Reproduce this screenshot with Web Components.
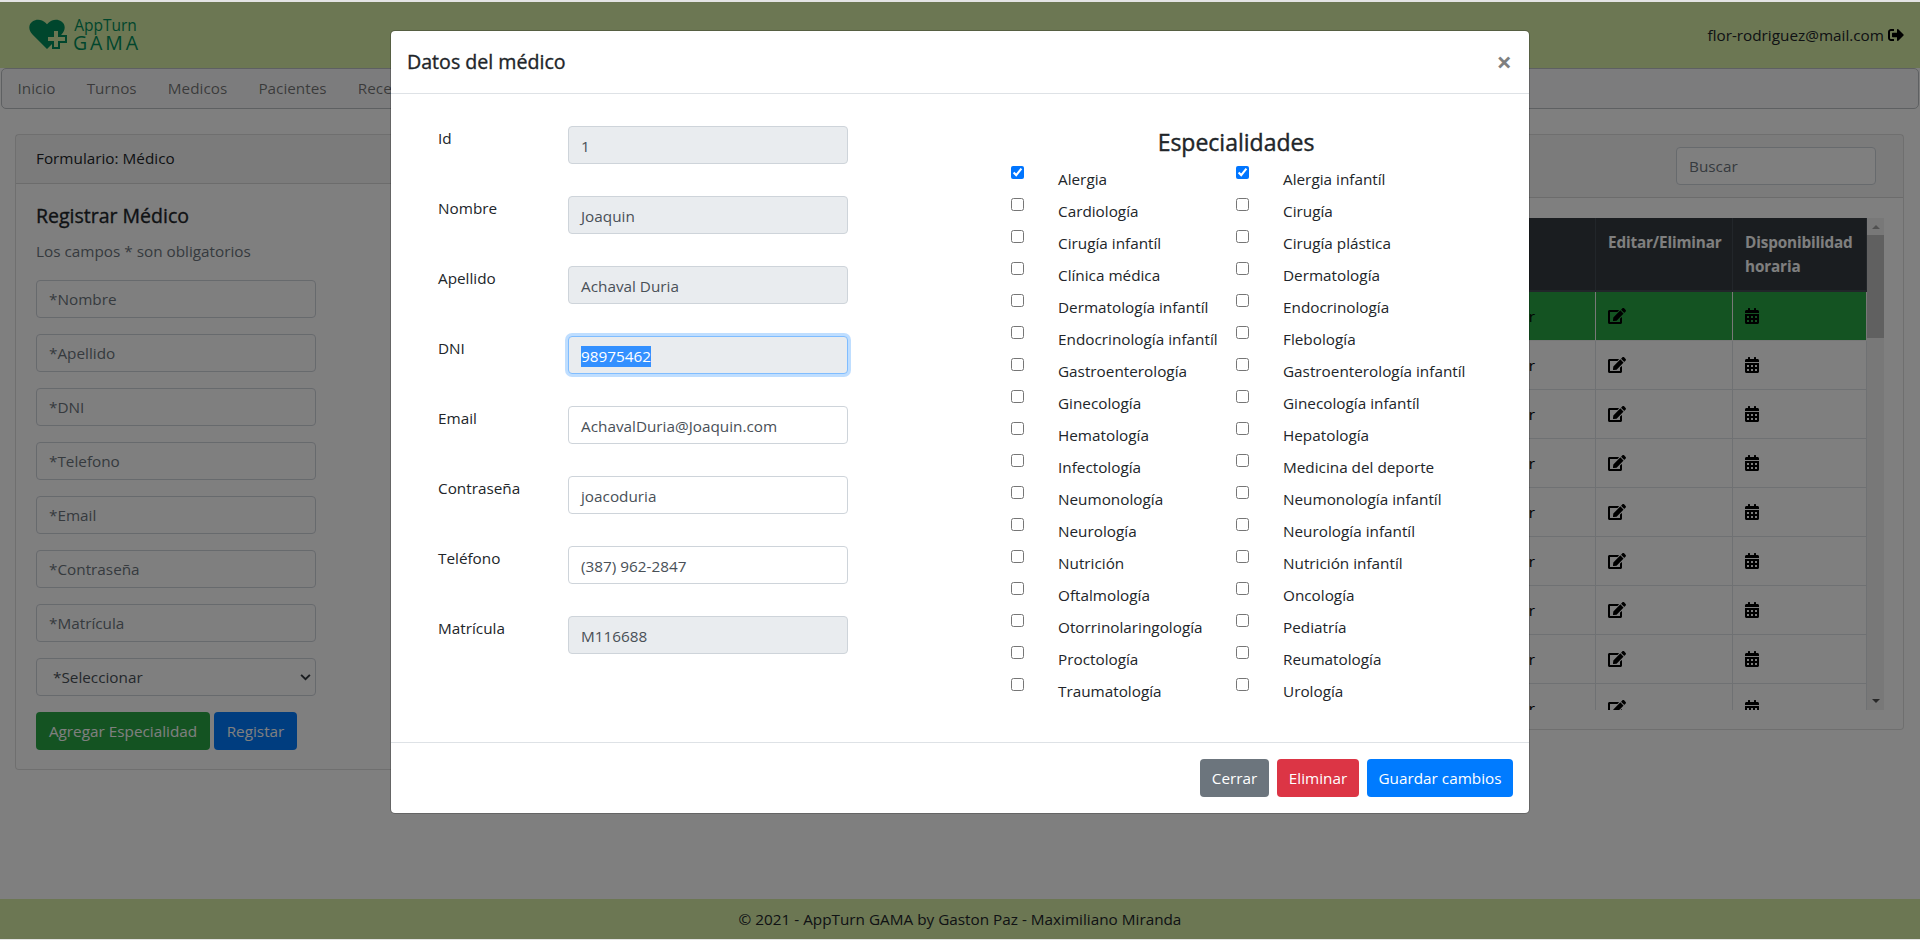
<!DOCTYPE html>
<html lang="es">
<head>
<meta charset="utf-8">
<title>AppTurn GAMA</title>
<style>
  html, body { margin: 0; height: 100%; overflow: hidden; }
  body {
    background: #e4e4e4;
    padding: 2px 0 1px;
    box-sizing: border-box;
    font-family: "Open Sans", "Noto Sans", sans-serif;
    font-size: 15.3px;
    line-height: 24px;
    color: #212529;
  }
</style>
</head>
<body>
<app-shell>
  <app-header email="flor-rodriguez@mail.com"></app-header>
  <app-nav></app-nav>
  <main-content></main-content>
  <app-footer></app-footer>
  <medico-modal></medico-modal>
</app-shell>

<script>
// Iconos (solid, mismas formas que usa la app)
const ICONS = {
  signOut: '<svg viewBox="0 0 512 512" width="16" height="16"><path fill="currentColor" d="M497 273L329 441c-15 15-41 4.5-41-17v-96H152c-13.3 0-24-10.7-24-24v-96c0-13.3 10.7-24 24-24h136V88c0-21.4 25.9-32 41-17l168 168c9.3 9.4 9.3 24.6 0 34zM192 436v-40c0-6.6-5.4-12-12-12H96c-17.7 0-32-14.3-32-32V160c0-17.7 14.3-32 32-32h84c6.6 0 12-5.4 12-12V76c0-6.6-5.4-12-12-12H96c-53 0-96 43-96 96v192c0 53 43 96 96 96h84c6.6 0 12-5.4 12-12z"/></svg>',
  edit: '<svg viewBox="0 0 576 512" width="18" height="16"><path fill="currentColor" d="M402.6 83.2l90.2 90.2c3.8 3.8 3.8 10 0 13.8L274.4 405.6l-92.8 10.3c-12.4 1.4-22.9-9.1-21.5-21.5l10.3-92.8L388.8 83.2c3.8-3.8 10-3.8 13.8 0zm162-22.9l-48.8-48.8c-15.2-15.2-39.9-15.2-55.2 0l-35.4 35.4c-3.8 3.8-3.8 10 0 13.8l90.2 90.2c3.8 3.8 10 3.8 13.8 0l35.4-35.4c15.2-15.3 15.2-40 0-55.2zM384 346.2V448H64V128h229.8c3.2 0 6.2-1.3 8.5-3.5l40-40c7.6-7.6 2.2-20.5-8.5-20.5H48C21.5 64 0 85.5 0 112v352c0 26.5 21.5 48 48 48h352c26.5 0 48-21.5 48-48V306.2c0-10.7-12.9-16-20.5-8.5l-40 40c-2.2 2.3-3.5 5.3-3.5 8.5z"/></svg>',
  calendar: '<svg viewBox="0 0 448 512" width="14" height="16"><path fill="currentColor" d="M0 464c0 26.5 21.5 48 48 48h352c26.5 0 48-21.5 48-48V192H0v272zm320-196c0-6.6 5.4-12 12-12h40c6.6 0 12 5.4 12 12v40c0 6.6-5.4 12-12 12h-40c-6.6 0-12-5.4-12-12v-40zm0 128c0-6.6 5.4-12 12-12h40c6.6 0 12 5.4 12 12v40c0 6.6-5.4 12-12 12h-40c-6.6 0-12-5.4-12-12v-40zM192 268c0-6.6 5.4-12 12-12h40c6.6 0 12 5.4 12 12v40c0 6.6-5.4 12-12 12h-40c-6.6 0-12-5.4-12-12v-40zm0 128c0-6.6 5.4-12 12-12h40c6.6 0 12 5.4 12 12v40c0 6.6-5.4 12-12 12h-40c-6.6 0-12-5.4-12-12v-40zM64 268c0-6.6 5.4-12 12-12h40c6.6 0 12 5.4 12 12v40c0 6.6-5.4 12-12 12H76c-6.6 0-12-5.4-12-12v-40zm0 128c0-6.6 5.4-12 12-12h40c6.6 0 12 5.4 12 12v40c0 6.6-5.4 12-12 12H76c-6.6 0-12-5.4-12-12v-40zM400 64h-48V16c0-8.8-7.2-16-16-16h-32c-8.8 0-16 7.2-16 16v48H160V16c0-8.8-7.2-16-16-16h-32c-8.8 0-16 7.2-16 16v48H48C21.5 64 0 85.5 0 112v48h448v-48c0-26.5-21.5-48-48-48z"/></svg>',
  chevron: '<svg viewBox="0 0 12 8" width="11" height="7"><path fill="none" stroke="currentColor" stroke-width="2.2" d="M1 1l5 5 5-5"/></svg>',
};

class AppShell extends HTMLElement {
  constructor() {
    super();
    this.attachShadow({ mode: "open" });
  }
  connectedCallback() {
    this.shadowRoot.innerHTML = `
      <style>
        :host { display: flex; flex-direction: column; position: relative; height: 937px; background: #fff; overflow: hidden; }
        .backdrop { position: absolute; inset: 0; background: rgba(0,0,0,.5); }
      </style>
      <slot></slot>
      <div class="backdrop"></div>
      <slot name="modal"></slot>
    `;
  }
}

class AppHeader extends HTMLElement {
  constructor() {
    super();
    this.attachShadow({ mode: "open" });
  }
  connectedCallback() {
    this.shadowRoot.innerHTML = `
      <style>
        :host { display: flex; align-items: center; justify-content: space-between; height: 66px; flex: none; background: #d8eea6; padding: 0 16px 0 29px; box-sizing: border-box; }
        .logo { display: flex; align-items: center; color: #008c5a; margin-top: -3px; }
        .logo svg { display: block; margin-top: 2px; }
        .words { margin-left: 0; display: flex; flex-direction: column; align-items: center; gap: 1px; }
        .app { font-size: 15.5px; line-height: 16px; height: 16px; }
        .gama { font-size: 19.5px; line-height: 17px; height: 17px; letter-spacing: 2.9px; margin-right: -3px; }
        .user { display: flex; align-items: center; gap: 4px; margin-top: -1px; color: #212529; }
        .user svg { color: #000; display: block; }
      </style>
      <div class="logo">
        <svg width="44" height="32" viewBox="0 0 44 32">
          <path fill="currentColor" d="M18 30 L3.500 15.500 C-1 11 -.5 5 3.500 2.500 C7.500 -.5 13 .3 16.500 3.800 L18 5.300 L19.500 3.800 C23 .3 28.500 -.5 32.500 2.500 C36.500 5 37 11 32.500 15.500 L18 30z"/>
          <path fill="#d8eea6" stroke="currentColor" stroke-width="2" d="M24 11h6v6h7v6h-7v6h-6v-6h-6v-6h6z"/>
        </svg>
        <div class="words"><span class="app">AppTurn</span><span class="gama">GAMA</span></div>
      </div>
      <div class="user"><span>${this.getAttribute("email")}</span>${ICONS.signOut}</div>
    `;
  }
}

class AppNav extends HTMLElement {
  constructor() {
    super();
    this.attachShadow({ mode: "open" });
  }
  connectedCallback() {
    const links = ["Inicio", "Turnos", "Medicos", "Pacientes", "Recetas"];
    this.shadowRoot.innerHTML = `
      <style>
        :host { display: flex; flex: none; height: 41px; margin: 0 1px; padding-bottom: 2px; box-sizing: border-box; background: #f8f9fa; border: 1px solid #bdc1c5; border-radius: 5px; align-items: center; color: rgba(0,0,0,.55); }
        a { padding: 0 15.6px; }
        a:first-child { margin-left: -1px; }
      </style>
      ${links.map((l) => `<a>${l}</a>`).join("")}
    `;
  }
}

class MainContent extends HTMLElement {
  constructor() {
    super();
    this.attachShadow({ mode: "open" });
  }
  connectedCallback() {
    this.shadowRoot.innerHTML = `
      <style>
        :host { display: flex; flex: 1; align-items: flex-start; gap: 20px; padding: 25px 16px 0 15px; }
        form-card { width: 440px; flex: none; }
        table-card { flex: 1; min-width: 0; }
      </style>
      <form-card></form-card>
      <table-card></table-card>
    `;
  }
}

class FormCard extends HTMLElement {
  constructor() {
    super();
    this.attachShadow({ mode: "open" });
  }
  connectedCallback() {
    const campos = ["*Nombre", "*Apellido", "*DNI", "*Telefono", "*Email", "*Contraseña", "*Matrícula"];
    this.shadowRoot.innerHTML = `
      <style>
        :host { display: block; background: #fff; border: 1px solid rgba(0,0,0,.125); border-radius: 4px; box-sizing: border-box; }
        .head { padding: 0 20px 2px; display: flex; align-items: center; background: rgba(0,0,0,.03); border-bottom: 1px solid rgba(0,0,0,.125); box-sizing: border-box; height: 49px; }
        .body { padding: 20px 20px 19px; }
        h5 { margin: 0; font-size: 19.5px; line-height: 24px; font-weight: 400; -webkit-text-stroke: .35px; }
        p { margin: 11px 0 17px; color: #6c757d; }
        .ph { display: block; width: 280px; height: 38px; box-sizing: border-box; border: 1px solid #ced4da; border-radius: 4px; padding: 6px 12px; color: #6c757d; margin-bottom: 16px; background: #fff; }
        .sel { display: flex; align-items: center; justify-content: space-between; color: #495057; padding-left: 16px; padding-right: 4px; }
        .sel svg { color: #343a40; }
        .btns { display: flex; gap: 4px; }
        button { font: inherit; height: 38px; border: 0; border-radius: 4px; color: #fff; padding: 0; }
        .ok { background: #28a745; width: 174px; }
        .reg { background: #007bff; width: 83px; }
      </style>
      <div class="head">Formulario: Médico</div>
      <div class="body">
        <h5>Registrar Médico</h5>
        <p>Los campos * son obligatorios</p>
        ${campos.map((c) => `<div class="ph">${c}</div>`).join("")}
        <div class="ph sel"><span>*Seleccionar</span>${ICONS.chevron}</div>
        <div class="btns"><button class="ok">Agregar Especialidad</button><button class="reg">Registar</button></div>
      </div>
    `;
  }
}

class TableCard extends HTMLElement {
  constructor() {
    super();
    this.attachShadow({ mode: "open" });
  }
  connectedCallback() {
    const filas = [];
    for (let i = 0; i < 9; i++) {
      filas.push(`<tr class="${i === 0 ? "sel" : ""}"><td></td><td>Ver</td><td>${ICONS.edit}</td><td>${ICONS.calendar}</td></tr>`);
    }
    this.shadowRoot.innerHTML = `
      <style>
        :host { display: block; background: #fff; border: 1px solid rgba(0,0,0,.125); border-radius: 4px; box-sizing: border-box; }
        .head { height: 63px; display: flex; align-items: center; justify-content: flex-end; padding: 0 27px 0 20px; background: rgba(0,0,0,.03); border-bottom: 1px solid rgba(0,0,0,.125); box-sizing: border-box; }
        .search { width: 200px; height: 38px; box-sizing: border-box; border: 1px solid #ced4da; border-radius: 4px; padding: 6px 12px; background: #fff; color: #6c757d; }
        .body { padding: 20px 19px 19px 20px; display: flex; }
        .wrap { flex: 1; min-width: 0; height: 492px; overflow: hidden; }
        table { width: 100%; table-layout: fixed; border-collapse: collapse; }
        th { background: #343a40; color: #fff; text-align: left; vertical-align: top; padding: 12px; font-weight: 700; border: 1px solid #454d55; border-bottom-width: 2px; border-top: 0; letter-spacing: -.15px; }
        td { height: 48px; box-sizing: content-box; padding: 0 12px; border: 1px solid #dee2e6; border-top: 0; color: #000; vertical-align: middle; }
        td svg { display: block; }
        tr.sel td { background: #28a745; border-color: #f1f1f1; }
        .c3 { width: 137px; } .c4 { width: 134px; } .c2 { width: 97px; }
        .bar { width: 17px; flex: none; background: #f1f1f1; height: 492px; display: flex; flex-direction: column; align-items: center; justify-content: space-between; position: relative; }
        .arr { width: 0; height: 0; border-left: 4px solid transparent; border-right: 4px solid transparent; margin: 7px 0; }
        .up { border-bottom: 4px solid #a3a3a3; }
        .down { border-top: 4px solid #505050; }
        .thumb { position: absolute; left: 0; right: 0; top: 17px; height: 103px; background: #c1c1c1; }
      </style>
      <div class="head"><div class="search">Buscar</div></div>
      <div class="body">
        <div class="wrap">
          <table>
            <colgroup><col><col class="c2"><col class="c3"><col class="c4"></colgroup>
            <thead><tr><th></th><th></th><th>Editar/Eliminar</th><th>Disponibilidad horaria</th></tr></thead>
            <tbody>${filas.join("")}</tbody>
          </table>
        </div>
        <div class="bar"><span class="arr up"></span><span class="thumb"></span><span class="arr down"></span></div>
      </div>
    `;
  }
}

class AppFooter extends HTMLElement {
  constructor() {
    super();
    this.attachShadow({ mode: "open" });
  }
  connectedCallback() {
    this.shadowRoot.innerHTML = `
      <style>
        :host { display: flex; flex: none; height: 40px; align-items: center; justify-content: center; background: #d8eea6; color: #212529; }
      </style>
      © 2021 - AppTurn GAMA by Gaston Paz - Maximiliano Miranda
    `;
  }
}

// Una fila del formulario del modal
class FormRow extends HTMLElement {
  constructor() {
    super();
    this.attachShadow({ mode: "open" });
  }
  connectedCallback() {
    const disabled = this.hasAttribute("disabled");
    const selected = this.hasAttribute("selected");
    const value = this.getAttribute("value");
    this.shadowRoot.innerHTML = `
      <style>
        :host { display: grid; grid-template-columns: 130px 280px; height: 38px; }
        .input { box-sizing: border-box; height: 38px; border: 1px solid #ced4da; border-radius: 4px; padding: 7px 12px 5px; color: #495057; background: #fff; white-space: nowrap; }
        .disabled { background: #e9ecef; }
        .focus { border-color: #80bdff; box-shadow: 0 0 0 3px rgba(0,123,255,.25); }
        .sel { background: #3390ff; color: #fff; display: inline-block; line-height: 21px; }
      </style>
      <div>${this.getAttribute("label")}</div>
      <div class="input ${disabled ? "disabled" : ""} ${selected ? "focus" : ""}">${selected ? `<span class="sel">${value}</span>` : value}</div>
    `;
  }
}

class SpecItem extends HTMLElement {
  constructor() {
    super();
    this.attachShadow({ mode: "open" });
  }
  connectedCallback() {
    this.shadowRoot.innerHTML = `
      <style>
        :host { display: flex; align-items: flex-start; height: 32px; }
        input { width: 13px; height: 13px; margin: 0 34px 0 0; flex: none; }
        label { margin-top: 1px; white-space: nowrap; }
      </style>
      <input type="checkbox" ${this.hasAttribute("checked") ? "checked" : ""}>
      <label>${this.getAttribute("name")}</label>
    `;
  }
}

class MedicoModal extends HTMLElement {
  constructor() {
    super();
    this.attachShadow({ mode: "open" });
  }
  connectedCallback() {
    this.slot = "modal";
    const campos = [
      ["Id", "1", "disabled"],
      ["Nombre", "Joaquin", "disabled"],
      ["Apellido", "Achaval Duria", "disabled"],
      ["DNI", "98975462", "disabled selected"],
      ["Email", "AchavalDuria@Joaquin.com", ""],
      ["Contraseña", "joacoduria", ""],
      ["Teléfono", "(387) 962-2847", ""],
      ["Matrícula", "M116688", "disabled"],
    ];
    const especialidades = [
      "Alergia", "Alergia infantíl", "Cardiología", "Cirugía", "Cirugía infantíl", "Cirugía plástica",
      "Clínica médica", "Dermatología", "Dermatología infantíl", "Endocrinología", "Endocrinología infantíl", "Flebología",
      "Gastroenterología", "Gastroenterología infantíl", "Ginecología", "Ginecología infantíl", "Hematología", "Hepatología",
      "Infectología", "Medicina del deporte", "Neumonología", "Neumonología infantíl", "Neurología", "Neurología infantíl",
      "Nutrición", "Nutrición infantíl", "Oftalmología", "Oncología", "Otorrinolaringología", "Pediatría",
      "Proctología", "Reumatología", "Traumatología", "Urología",
    ];
    this.shadowRoot.innerHTML = `
      <style>
        :host { position: absolute; top: 28px; left: 390px; width: 1140px; background: #fff; border: 1px solid rgba(0,0,0,.2); background-clip: padding-box; border-radius: 5px; display: block; box-sizing: border-box; }
        header { display: flex; justify-content: space-between; align-items: center; height: 63px; box-sizing: border-box; padding: 0 17px 0 16px; border-bottom: 1px solid #dee2e6; }
        h5 { margin: 0; font-size: 19.6px; font-weight: 400; -webkit-text-stroke: .35px; }
        .close { font-size: 27px; font-weight: 700; color: rgba(0,0,0,.5); line-height: 24px; }
        .body { display: flex; height: 648px; box-sizing: border-box; }
        .left { width: 620px; box-sizing: border-box; padding: 32px 0 0 47px; display: grid; grid-auto-rows: 38px; row-gap: 32px; align-content: start; }
        .right { width: 450px; padding-top: 34px; }
        h4 { margin: 0 0 9px; font-size: 23px; line-height: 29px; font-weight: 400; -webkit-text-stroke: .4px; text-align: center; }
        .specs { display: grid; grid-template-columns: 225px 225px; }
        footer { display: flex; justify-content: flex-end; gap: 8px; padding: 16px; border-top: 1px solid #dee2e6; }
        button { font: inherit; height: 38px; border: 0; border-radius: 4px; color: #fff; padding: 0; }
        .gris { background: #6c757d; width: 69px; }
        .rojo { background: #dc3545; width: 82px; }
        .azul { background: #007bff; width: 146px; }
      </style>
      <header><h5>Datos del médico</h5><span class="close">×</span></header>
      <div class="body">
        <div class="left">
          ${campos.map(([l, v, a]) => `<form-row label="${l}" value="${v}" ${a}></form-row>`).join("")}
        </div>
        <div class="right">
          <h4>Especialidades</h4>
          <div class="specs">
            ${especialidades.map((e, i) => `<spec-item name="${e}" ${i < 2 ? "checked" : ""}></spec-item>`).join("")}
          </div>
        </div>
      </div>
      <footer>
        <button class="gris">Cerrar</button>
        <button class="rojo">Eliminar</button>
        <button class="azul">Guardar cambios</button>
      </footer>
    `;
  }
}

customElements.define("form-row", FormRow);
customElements.define("spec-item", SpecItem);
customElements.define("form-card", FormCard);
customElements.define("table-card", TableCard);
customElements.define("main-content", MainContent);
customElements.define("app-header", AppHeader);
customElements.define("app-nav", AppNav);
customElements.define("app-footer", AppFooter);
customElements.define("medico-modal", MedicoModal);
customElements.define("app-shell", AppShell);
</script>
</body>
</html>
